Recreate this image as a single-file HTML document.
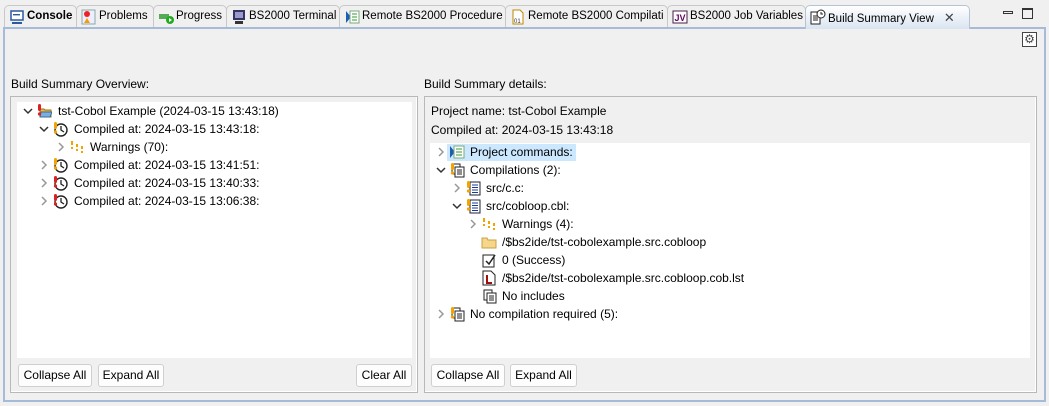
<!DOCTYPE html>
<html><head><meta charset="utf-8"><style>
*{margin:0;padding:0;box-sizing:border-box}
body{width:1049px;height:406px;background:#f0f0f0;font-family:"Liberation Sans",sans-serif;font-size:12px;color:#000;position:relative;overflow:hidden}
.a{position:absolute;white-space:nowrap}
.tab{position:absolute;top:5px;height:23px;border:1px solid #c8c8c8;border-bottom:none;border-radius:5px 5px 0 0;background:#f0f0f0;padding:4px 0 0 22px;font-size:11.5px;white-space:nowrap;overflow:hidden}
.tab svg{position:absolute;left:4px;top:3px}
.t{position:absolute;white-space:nowrap;line-height:18px;height:18px}
.btn{position:absolute;top:364px;height:23px;border:1px solid #cfcfcf;border-radius:3px;background:#fdfdfd;text-align:center;line-height:21px;font-size:12px;white-space:nowrap}
.ch{position:absolute;width:10px;height:10px}
.ic{position:absolute;width:16px;height:16px}
</style></head><body>
<!-- tabs -->
<div class="tab" style="left:4px;width:73px;font-weight:bold"><svg width="16" height="16"><rect x="2" y="2" width="12" height="9" fill="#fff" stroke="#2a5aa0" stroke-width="1.5"/><rect x="4" y="5" width="7" height="1.4" fill="#2a5aa0"/><rect x="3" y="13" width="10" height="2" fill="#2a5aa0"/></svg>Console</div>
<div class="tab" style="left:76px;width:78px"><svg width="16" height="16"><rect x="1" y="1" width="13" height="14" fill="#eef" stroke="#8aa"/><circle cx="6" cy="5" r="3" fill="#e22"/><path d="M3 14 L6 9 L9 14Z" fill="#f90"/></svg>Problems</div>
<div class="tab" style="left:153px;width:74px"><svg width="16" height="16"><rect x="1" y="5" width="10" height="5" fill="#5a5" /><circle cx="12" cy="11" r="4" fill="#2a2"/><path d="M11 9 L14 11 L11 13Z" fill="#fff"/></svg>Progress</div>
<div class="tab" style="left:226px;width:114px"><svg width="16" height="16"><rect x="2" y="1" width="12" height="10" fill="#336" /><rect x="4" y="3" width="8" height="6" fill="#99c"/><rect x="4" y="12" width="8" height="3" fill="#333"/></svg>BS2000 Terminal</div>
<div class="tab" style="left:339px;width:167px"><svg width="16" height="16"><path d="M2 2 L7 8 L2 14Z" fill="#1a5fb4"/><rect x="6" y="2" width="9" height="12" fill="#fff" stroke="#7a7" /><path d="M8 5h5M8 8h5M8 11h5" stroke="#393"/></svg>Remote BS2000 Procedure</div>
<div class="tab" style="left:505px;width:163px"><svg width="16" height="16"><path d="M3 1h7l3 3v11H3z" fill="#fff" stroke="#b80"/><text x="4" y="14" font-size="6" fill="#333">01</text></svg>Remote BS2000 Compilati</div>
<div class="tab" style="left:667px;width:139px"><svg width="16" height="16"><rect x="1" y="2" width="14" height="12" fill="#fff" stroke="#424"/><text x="2.5" y="12" font-size="9" font-weight="bold" fill="#606">JV</text></svg>BS2000 Job Variables</div>
<div class="tab" style="left:805px;width:165px;background:linear-gradient(#fff,#d9e4f1);border-color:#b5c3d5;z-index:2;height:24px">
<svg width="16" height="16"><rect x="1" y="3" width="9" height="12" fill="#fff" stroke="#222"/><path d="M3 7h5M3 9h5M3 11h5" stroke="#222"/><circle cx="11" cy="5" r="4" fill="#fff" stroke="#222"/><path d="M11 3v2h2" stroke="#222" fill="none"/></svg>Build Summary View<span style="margin-left:10px;color:#444;font-size:13px">✕</span></div>
<div class="a" style="left:1003px;top:11px;width:10px;height:3px;border:1px solid #333"></div>
<div class="a" style="left:1022px;top:8px;width:11px;height:11px;border:1px solid #333;border-top-width:2px"></div>
<!-- frame -->
<div class="a" style="left:3px;top:27px;width:1043px;height:375px;border:2px solid #a5bbd8"></div>
<div class="a" style="left:1022px;top:32px;width:15px;height:15px;border:1px solid #444;background:#fff;text-align:center;line-height:12px;font-size:12px;color:#444">⚙</div>
<!-- labels -->
<div class="a" style="left:11px;top:77px">Build Summary Overview:</div>
<div class="a" style="left:424px;top:77px">Build Summary details:</div>
<!-- groups -->
<div class="a" style="left:10px;top:96px;width:408px;height:297px;border:1px solid #b8b8b8;box-shadow:inset -1px -1px 0 #fff"></div>
<div class="a" style="left:424px;top:96px;width:613px;height:297px;border:1px solid #b8b8b8;box-shadow:inset -1px -1px 0 #fff"></div>
<div class="a" style="left:17px;top:102px;width:395px;height:256px;background:#fff"></div>
<div class="a" style="left:430px;top:143px;width:600px;height:215px;background:#fff"></div>
<div class="a" style="left:431px;top:102px;line-height:18px">Project name: tst-Cobol Example</div>
<div class="a" style="left:431px;top:121px;line-height:18px">Compiled at: 2024-03-15 13:43:18</div>
<svg width="0" height="0" style="position:absolute"><defs>
<g id="down"><path d="M1 3 L5 7 L9 3" fill="none" stroke="#333" stroke-width="1.5"/></g>
<g id="right"><path d="M3 1 L7 5 L3 9" fill="none" stroke="#999" stroke-width="1.5"/></g>
<g id="clk"><circle cx="9" cy="9" r="6" fill="#fff" stroke="#222" stroke-width="1.4"/><path d="M9 5v4l3 2" fill="none" stroke="#222" stroke-width="1.3"/></g>
<g id="doc"><rect x="5" y="2" width="10" height="13" fill="#fff" stroke="#223"/><path d="M7 5h6M7 7.5h6M7 10h6M7 12.5h6" stroke="#1a3a9a"/></g>
<g id="docs"><rect x="3" y="2" width="8" height="10" fill="#fff" stroke="#222"/><rect x="6" y="5" width="9" height="10" fill="#fff" stroke="#222"/><path d="M8 8h5M8 10h5M8 12h5" stroke="#222"/></g>
<g id="warn"><rect x="2" y="1" width="3" height="7" rx="1.5" fill="#f5a300"/><circle cx="3.5" cy="11" r="1.6" fill="#f5a300"/></g>
<g id="err"><rect x="2" y="1" width="3" height="7" rx="1.5" fill="#e02020"/><circle cx="3.5" cy="11" r="1.6" fill="#e02020"/></g>
<g id="ws"><rect x="2" y="2" width="2" height="4" fill="#f5a300"/><rect x="2" y="8" width="2" height="2" fill="#f5a300"/><rect x="7" y="5" width="2" height="3" fill="#f5a300"/><rect x="7" y="10" width="2" height="2" fill="#f5a300"/><rect x="12" y="7" width="2" height="3" fill="#f5a300"/><rect x="12" y="12" width="2" height="2" fill="#f5a300"/></g>
</defs></svg>
<!-- left tree -->
<svg class="ch" style="left:23px;top:106px"><use href="#down"/></svg>
<svg class="ic" style="left:36px;top:103px"><path d="M4 6h4l1 1h6v7H4z" fill="#e8b84a" stroke="#a07010"/><path d="M5 9h11l-2 5H4z" fill="#7ab0e0" stroke="#3a6a9a"/><use href="#err"/></svg>
<div class="t" style="left:58px;top:102px">tst-Cobol Example (2024-03-15 13:43:18)</div>
<svg class="ch" style="left:39px;top:124px"><use href="#down"/></svg>
<svg class="ic" style="left:52px;top:121px"><use href="#clk"/><use href="#warn"/></svg>
<div class="t" style="left:74px;top:120px">Compiled at: 2024-03-15 13:43:18:</div>
<svg class="ch" style="left:56px;top:142px"><use href="#right"/></svg>
<svg class="ic" style="left:69px;top:139px"><use href="#ws"/></svg>
<div class="t" style="left:90px;top:138px">Warnings (70):</div>
<svg class="ch" style="left:39px;top:160px"><use href="#right"/></svg>
<svg class="ic" style="left:52px;top:157px"><use href="#clk"/><use href="#warn"/></svg>
<div class="t" style="left:74px;top:156px">Compiled at: 2024-03-15 13:41:51:</div>
<svg class="ch" style="left:39px;top:178px"><use href="#right"/></svg>
<svg class="ic" style="left:52px;top:175px"><use href="#clk"/><use href="#err"/></svg>
<div class="t" style="left:74px;top:174px">Compiled at: 2024-03-15 13:40:33:</div>
<svg class="ch" style="left:39px;top:196px"><use href="#right"/></svg>
<svg class="ic" style="left:52px;top:193px"><use href="#clk"/><use href="#err"/></svg>
<div class="t" style="left:74px;top:192px">Compiled at: 2024-03-15 13:06:38:</div>
<!-- right tree -->
<div class="a" style="left:447px;top:144px;width:129px;height:17px;background:#cce8ff"></div>
<svg class="ch" style="left:436px;top:147px"><use href="#right"/></svg>
<svg class="ic" style="left:449px;top:144px"><path d="M1 2 L6 8 L1 14Z" fill="#1a5fb4"/><rect x="5" y="2" width="10" height="12" fill="#fff" stroke="#7a7"/><path d="M7 5h6M7 8h6M7 11h6" stroke="#393"/></svg>
<div class="t" style="left:470px;top:143px">Project commands:</div>
<svg class="ch" style="left:436px;top:165px"><use href="#down"/></svg>
<svg class="ic" style="left:449px;top:162px"><use href="#docs"/><use href="#warn"/></svg>
<div class="t" style="left:470px;top:161px">Compilations (2):</div>
<svg class="ch" style="left:452px;top:183px"><use href="#right"/></svg>
<svg class="ic" style="left:465px;top:180px"><use href="#doc"/><use href="#warn"/></svg>
<div class="t" style="left:486px;top:179px">src/c.c:</div>
<svg class="ch" style="left:452px;top:201px"><use href="#down"/></svg>
<svg class="ic" style="left:465px;top:198px"><use href="#doc"/><use href="#warn"/></svg>
<div class="t" style="left:486px;top:197px">src/cobloop.cbl:</div>
<svg class="ch" style="left:468px;top:219px"><use href="#right"/></svg>
<svg class="ic" style="left:481px;top:216px"><use href="#ws"/></svg>
<div class="t" style="left:502px;top:215px">Warnings (4):</div>
<svg class="ic" style="left:481px;top:234px"><path d="M1 4h5l1 2h8v8H1z" fill="#f6d68a" stroke="#c9a040"/></svg>
<div class="t" style="left:502px;top:233px">/$bs2ide/tst-cobolexample.src.cobloop</div>
<svg class="ic" style="left:481px;top:252px"><rect x="2" y="3" width="11" height="12" fill="#fff" stroke="#222"/><path d="M5 9l3 3 6-9" fill="none" stroke="#222" stroke-width="1.5"/></svg>
<div class="t" style="left:502px;top:251px">0 (Success)</div>
<svg class="ic" style="left:481px;top:270px"><path d="M2 1h8l4 4v10H2z" fill="#fff" stroke="#222"/><path d="M6 5v8h5" fill="none" stroke="#a01010" stroke-width="2"/></svg>
<div class="t" style="left:502px;top:269px">/$bs2ide/tst-cobolexample.src.cobloop.cob.lst</div>
<svg class="ic" style="left:481px;top:288px"><use href="#docs"/></svg>
<div class="t" style="left:502px;top:287px">No includes</div>
<svg class="ch" style="left:436px;top:309px"><use href="#right"/></svg>
<svg class="ic" style="left:449px;top:306px"><use href="#docs"/><use href="#warn"/></svg>
<div class="t" style="left:470px;top:305px">No compilation required (5):</div>
<!-- buttons -->
<div class="btn" style="left:18px;width:74px">Collapse All</div>
<div class="btn" style="left:98px;width:66px">Expand All</div>
<div class="btn" style="left:356px;width:56px">Clear All</div>
<div class="btn" style="left:431px;width:74px">Collapse All</div>
<div class="btn" style="left:510px;width:67px">Expand All</div>
</body></html>
